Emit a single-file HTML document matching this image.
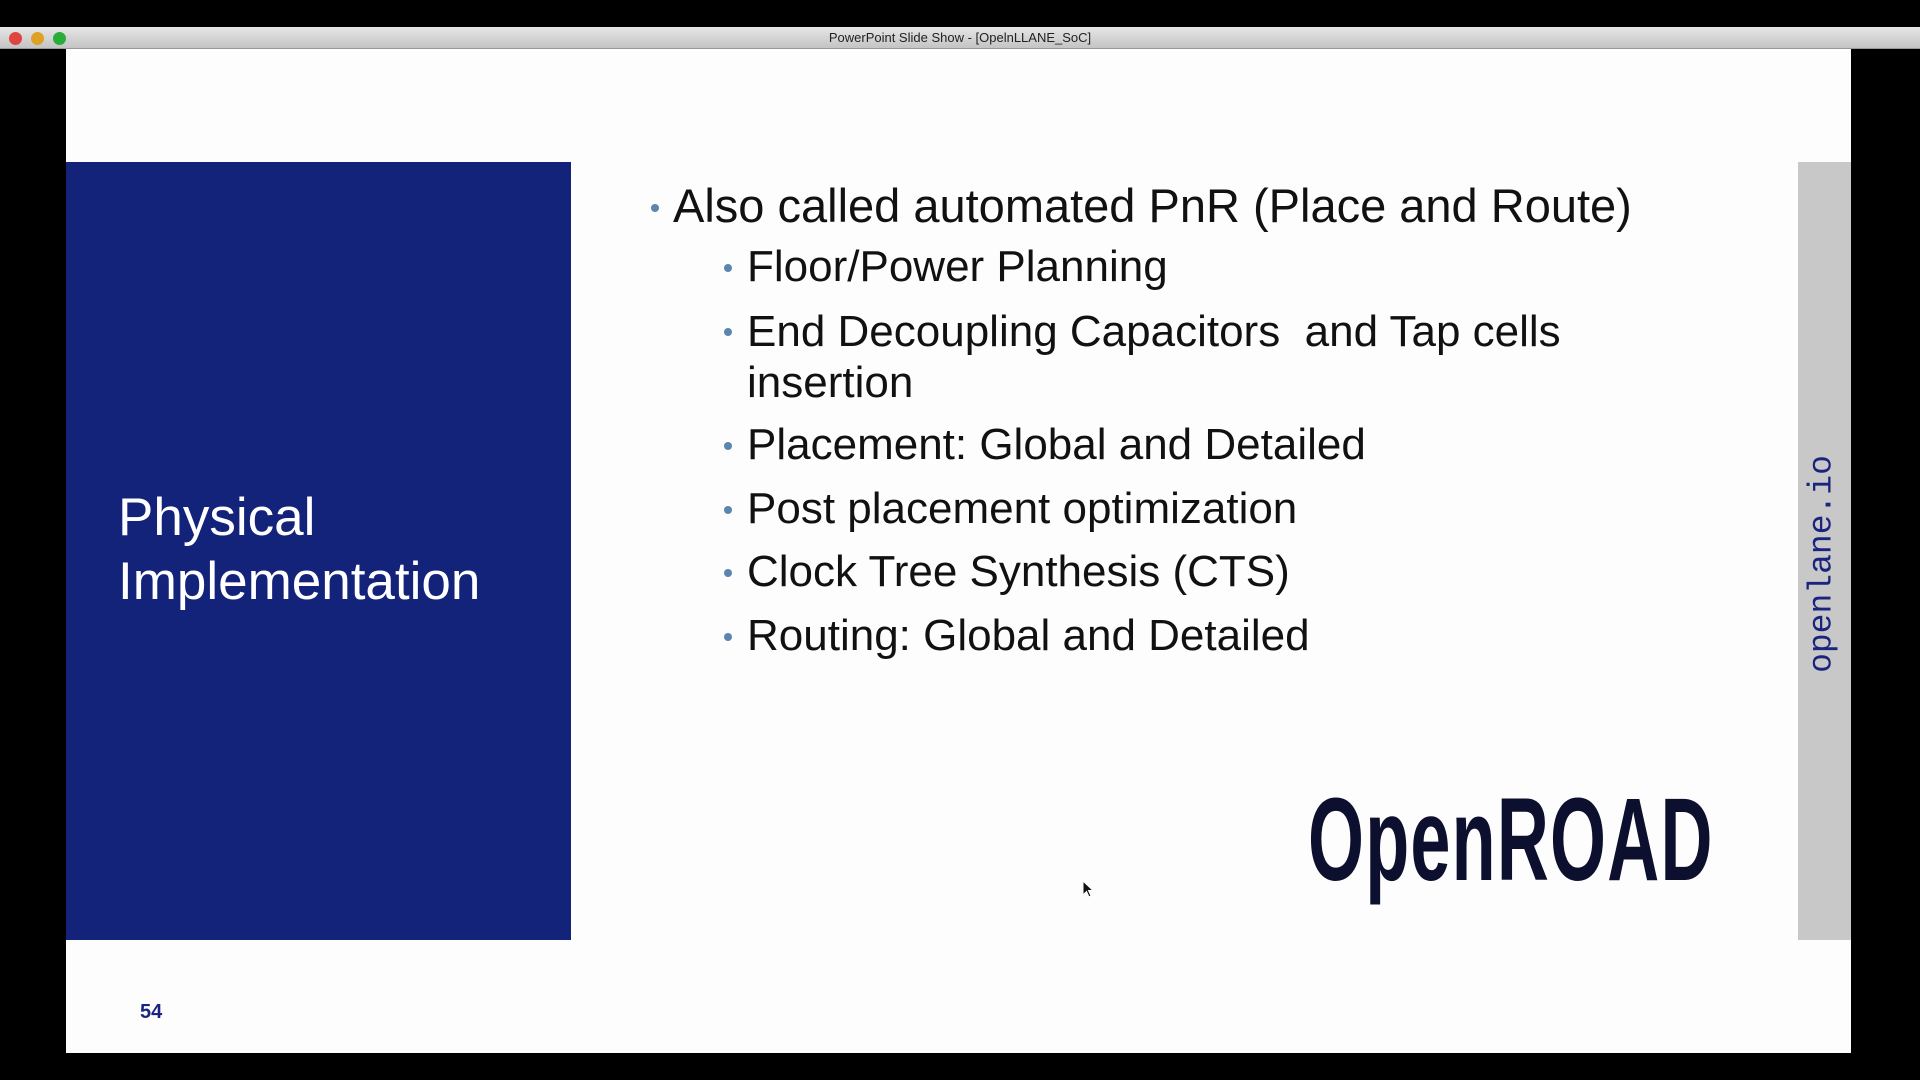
<!DOCTYPE html>
<html><head><meta charset="utf-8"><style>
*{margin:0;padding:0;box-sizing:border-box}
body{width:1920px;height:1080px;background:#000;position:relative;overflow:hidden;font-family:"Liberation Sans",sans-serif}
.bar{position:absolute;left:0;top:27px;width:1920px;height:22px;background:linear-gradient(#e6e6e6,#c4c4c4);border-bottom:1px solid #999}
.bar .t{position:absolute;left:0;right:0;top:3px;text-align:center;font-size:13px;color:#222}
.dot{position:absolute;top:5px;width:13px;height:13px;border-radius:50%}
.slide{position:absolute;left:66px;top:49px;width:1785px;height:1004px;background:#fdfdfd}
.blue{position:absolute;left:0;top:113px;width:505px;height:778px;background:#14237a}
.blue div{position:absolute;left:52px;top:324px;color:#fff;font-size:53px;line-height:64px}
.gray{position:absolute;left:1732px;top:113px;width:53px;height:778px;background:#c8c8c8}
.ol{position:absolute;left:1822px;top:564px;transform:translate(-50%,-50%) rotate(-90deg);font-family:"Liberation Mono",monospace;font-size:33px;color:#1a237e;white-space:nowrap}
.txt{position:absolute;color:#111;white-space:nowrap}
.b{position:absolute;width:8px;height:8px;border-radius:50%;background:#5b86b0}
.road{position:absolute;left:1308px;top:772px;font-weight:bold;font-size:118px;color:#0d0f2e;transform:scaleX(0.61);transform-origin:left top;letter-spacing:2px}
.num{position:absolute;left:140px;top:1001px;font-weight:bold;font-size:20px;color:#1a237e}
.s{font-size:44px}
</style></head><body>
<div class="bar">
<div class="dot" style="left:9px;background:#e0443e"></div>
<div class="dot" style="left:31px;background:#dea123"></div>
<div class="dot" style="left:53px;background:#2aac3b"></div>
<div class="t">PowerPoint Slide Show - [OpelnLLANE_SoC]</div>
</div>
<div class="slide">
<div class="blue"><div>Physical<br>Implementation</div></div>
<div class="gray"></div>
</div>
<div class="ol">openlane.io</div>
<div class="b" style="left:651px;top:204px"></div>
<div class="txt" style="left:673px;top:178px;font-size:47px">Also called automated PnR (Place and Route)</div>
<div class="b" style="left:724px;top:264px"></div>
<div class="txt s" style="left:747px;top:242px">Floor/Power Planning</div>
<div class="b" style="left:724px;top:328px"></div>
<div class="txt s" style="left:747px;top:306px;line-height:51px">End Decoupling Capacitors&nbsp; and Tap cells<br>insertion</div>
<div class="b" style="left:724px;top:442px"></div>
<div class="txt s" style="left:747px;top:420px">Placement: Global and Detailed</div>
<div class="b" style="left:724px;top:506px"></div>
<div class="txt s" style="left:747px;top:484px">Post placement optimization</div>
<div class="b" style="left:724px;top:569px"></div>
<div class="txt s" style="left:747px;top:547px">Clock Tree Synthesis (CTS)</div>
<div class="b" style="left:724px;top:633px"></div>
<div class="txt s" style="left:747px;top:611px">Routing: Global and Detailed</div>
<div class="road">OpenROAD</div>
<div class="num">54</div>
<svg style="position:absolute;left:1082px;top:880px" width="14" height="20" viewBox="0 0 14 20"><path d="M1 1 L1 15 L4.5 11.5 L7 17 L9 16 L6.5 10.5 L11 10.5 Z" fill="#111" stroke="#fff" stroke-width="1"/></svg>
</body></html>
